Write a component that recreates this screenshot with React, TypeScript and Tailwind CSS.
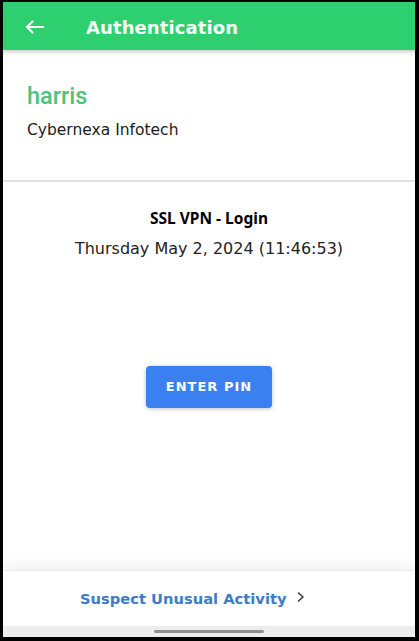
import React from "react";

export default function App() {
  const dv = { fontFamily: '"DejaVu Sans", sans-serif' } as React.CSSProperties;
  return (
    <div
      className="w-[419px] h-[641px] bg-black pt-[2px] pl-[3px] pr-[4px] pb-[4px]"
      style={dv}
    >
      <div className="w-[412px] h-[635px] bg-white flex flex-col overflow-hidden">
        {/* Header */}
        <div className="relative z-10 h-[48px] shrink-0 bg-[#2ecf6e] flex items-center pl-[22px] shadow-[0_2px_4px_rgba(0,0,0,0.22)]">
          <svg width="19" height="14" viewBox="0 0 19 14" fill="none" className="mt-[2px]">
            <path d="M18 7H2" stroke="white" strokeWidth="2.2" strokeLinecap="round" />
            <path d="M7.5 1.5L2 7l5.5 5.5" stroke="white" strokeWidth="2.2" strokeLinecap="round" strokeLinejoin="round" />
          </svg>
          <div className="ml-[42px] pt-[3px] text-[#f4fff8] text-[18px] leading-[22px] font-bold tracking-[0.1px]">
            Authentication
          </div>
        </div>

        {/* Content */}
        <div className="h-[520px] shrink-0 flex flex-col">
          <div className="h-[130px] shrink-0 pl-[24px] pt-[33px]">
            <div
              className="text-[23.5px] leading-[26px] font-medium text-[#4cc37e]"
              style={{ fontFamily: 'Roboto, sans-serif' }}
            >
              harris
            </div>
            <div className="mt-[11px] text-[15.5px] leading-[20px] text-[#1c1c1c]">
              Cybernexa Infotech
            </div>
          </div>
          <div className="h-[2px] shrink-0 bg-[#e2e2e2] shadow-[0_-3px_5px_rgba(0,0,0,0.03)]" />
          <div className="flex flex-col items-center pt-[26px]">
            <div
              className="text-[15.5px] leading-[20px] font-bold text-black"
              style={{ fontFamily: '"Noto Sans", sans-serif' }}
            >
              SSL VPN - Login
            </div>
            <div className="mt-[10px] text-[16px] leading-[22px] text-[#222222]">
              Thursday May 2, 2024 (11:46:53)
            </div>
            <button className="mt-[106px] w-[126px] h-[42px] rounded-[4px] bg-[#3a80f0] text-white text-[13px] font-bold tracking-[1px] shadow-[0_1px_4px_rgba(0,0,0,0.25)] flex items-center justify-center">
              ENTER PIN
            </button>
          </div>
        </div>

        {/* Footer */}
        <div className="relative h-[56px] shrink-0 bg-white border-t border-[#ebebeb] shadow-[0_-6px_10px_rgba(0,0,0,0.05)] flex items-center pl-[77px]">
          <span className="text-[14.7px] font-bold text-[#3d7cc9] leading-[20px]">
            Suspect Unusual Activity
          </span>
          <svg width="8" height="10" viewBox="0 0 8 10" fill="none" className="ml-[10px] -mt-[3px]">
            <path d="M1.5 1l4.5 4-4.5 4" stroke="#333" strokeWidth="1.5" strokeLinecap="round" strokeLinejoin="round" />
          </svg>
        </div>

        {/* Nav bar */}
        <div className="h-[11px] shrink-0 bg-[#ededed] flex justify-center pt-[4px]">
          <div className="w-[110px] h-[3px] rounded-full bg-[#8f8f8f]" />
        </div>
      </div>
    </div>
  );
}
